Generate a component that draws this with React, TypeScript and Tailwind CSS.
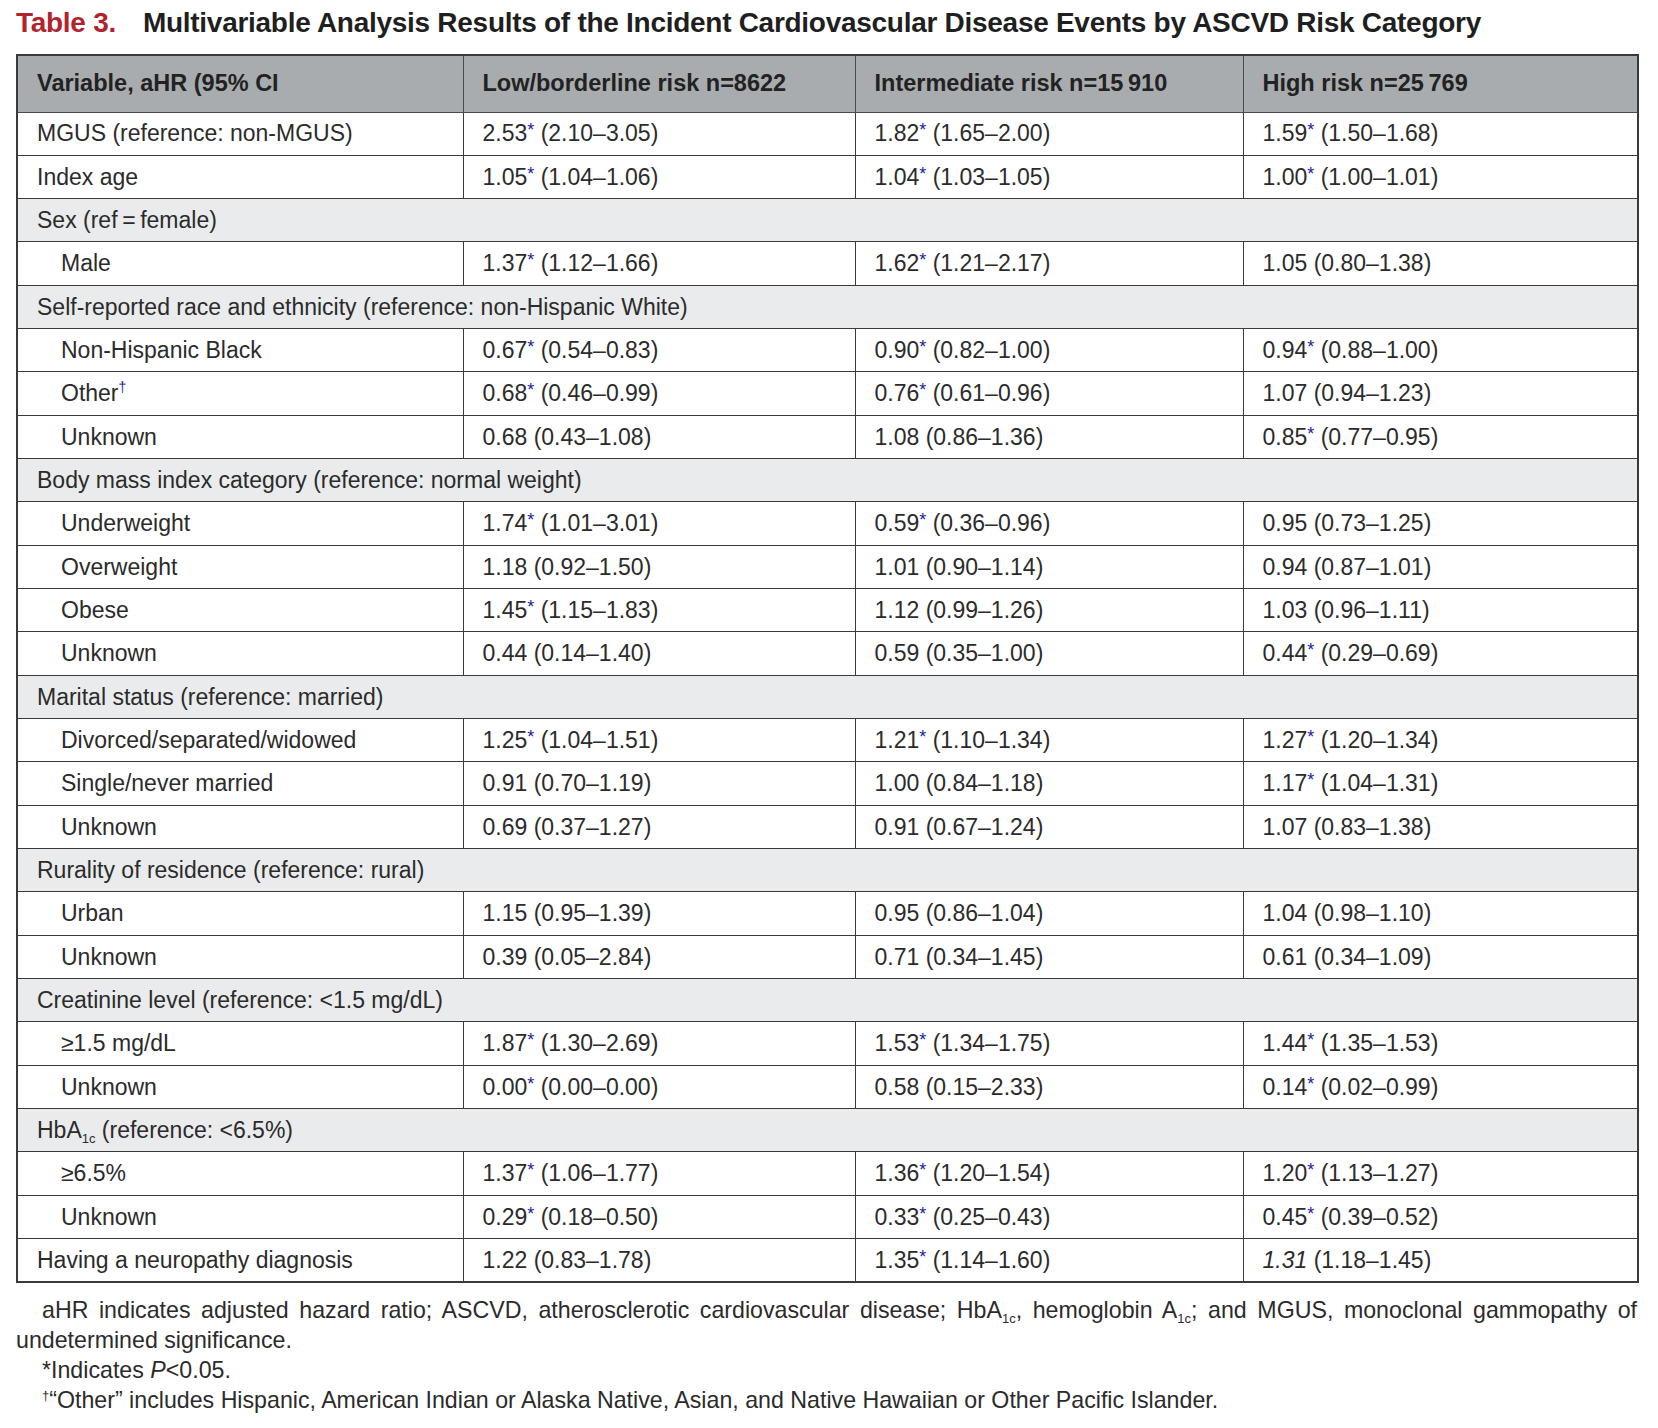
import React from "react";

type Cell = { v: string; star?: boolean; ci: string; italic?: boolean };
type Row =
  | { kind: "section"; label: React.ReactNode }
  | { kind: "data"; label: React.ReactNode; indent?: boolean; cells: Cell[] };

const c = (s: string): Cell => {
  const m = s.match(/^([0-9.]+)(\*?) (.*)$/);
  if (!m) return { v: s, ci: "" };
  return { v: m[1], star: m[2] === "*", ci: m[3] };
};

const Star = () => (
  <span className="relative -top-[5px] text-[18px] leading-none text-[#1c1c9c]">*</span>
);

const Dagger = () => (
  <span className="relative -top-[9px] text-[14px] leading-none text-[#1c1c9c]">†</span>
);

const Sub = ({ children }: { children: React.ReactNode }) => (
  <span className="relative top-[5px] text-[13px] leading-none">{children}</span>
);

const rows: Row[] = [
  { kind: "data", label: "MGUS (reference: non-MGUS)", cells: [c("2.53* (2.10–3.05)"), c("1.82* (1.65–2.00)"), c("1.59* (1.50–1.68)")] },
  { kind: "data", label: "Index age", cells: [c("1.05* (1.04–1.06)"), c("1.04* (1.03–1.05)"), c("1.00* (1.00–1.01)")] },
  { kind: "section", label: "Sex (ref\u2009=\u2009female)" },
  { kind: "data", indent: true, label: "Male", cells: [c("1.37* (1.12–1.66)"), c("1.62* (1.21–2.17)"), c("1.05 (0.80–1.38)")] },
  { kind: "section", label: "Self-reported race and ethnicity (reference: non-Hispanic White)" },
  { kind: "data", indent: true, label: "Non-Hispanic Black", cells: [c("0.67* (0.54–0.83)"), c("0.90* (0.82–1.00)"), c("0.94* (0.88–1.00)")] },
  { kind: "data", indent: true, label: (<>Other<Dagger /></>), cells: [c("0.68* (0.46–0.99)"), c("0.76* (0.61–0.96)"), c("1.07 (0.94–1.23)")] },
  { kind: "data", indent: true, label: "Unknown", cells: [c("0.68 (0.43–1.08)"), c("1.08 (0.86–1.36)"), c("0.85* (0.77–0.95)")] },
  { kind: "section", label: "Body mass index category (reference: normal weight)" },
  { kind: "data", indent: true, label: "Underweight", cells: [c("1.74* (1.01–3.01)"), c("0.59* (0.36–0.96)"), c("0.95 (0.73–1.25)")] },
  { kind: "data", indent: true, label: "Overweight", cells: [c("1.18 (0.92–1.50)"), c("1.01 (0.90–1.14)"), c("0.94 (0.87–1.01)")] },
  { kind: "data", indent: true, label: "Obese", cells: [c("1.45* (1.15–1.83)"), c("1.12 (0.99–1.26)"), c("1.03 (0.96–1.11)")] },
  { kind: "data", indent: true, label: "Unknown", cells: [c("0.44 (0.14–1.40)"), c("0.59 (0.35–1.00)"), c("0.44* (0.29–0.69)")] },
  { kind: "section", label: "Marital status (reference: married)" },
  { kind: "data", indent: true, label: "Divorced/separated/widowed", cells: [c("1.25* (1.04–1.51)"), c("1.21* (1.10–1.34)"), c("1.27* (1.20–1.34)")] },
  { kind: "data", indent: true, label: "Single/never married", cells: [c("0.91 (0.70–1.19)"), c("1.00 (0.84–1.18)"), c("1.17* (1.04–1.31)")] },
  { kind: "data", indent: true, label: "Unknown", cells: [c("0.69 (0.37–1.27)"), c("0.91 (0.67–1.24)"), c("1.07 (0.83–1.38)")] },
  { kind: "section", label: "Rurality of residence (reference: rural)" },
  { kind: "data", indent: true, label: "Urban", cells: [c("1.15 (0.95–1.39)"), c("0.95 (0.86–1.04)"), c("1.04 (0.98–1.10)")] },
  { kind: "data", indent: true, label: "Unknown", cells: [c("0.39 (0.05–2.84)"), c("0.71 (0.34–1.45)"), c("0.61 (0.34–1.09)")] },
  { kind: "section", label: "Creatinine level (reference: <1.5 mg/dL)" },
  { kind: "data", indent: true, label: "≥1.5 mg/dL", cells: [c("1.87* (1.30–2.69)"), c("1.53* (1.34–1.75)"), c("1.44* (1.35–1.53)")] },
  { kind: "data", indent: true, label: "Unknown", cells: [c("0.00* (0.00–0.00)"), c("0.58 (0.15–2.33)"), c("0.14* (0.02–0.99)")] },
  { kind: "section", label: (<>HbA<Sub>1c</Sub> (reference: &lt;6.5%)</>) },
  { kind: "data", indent: true, label: "≥6.5%", cells: [c("1.37* (1.06–1.77)"), c("1.36* (1.20–1.54)"), c("1.20* (1.13–1.27)")] },
  { kind: "data", indent: true, label: "Unknown", cells: [c("0.29* (0.18–0.50)"), c("0.33* (0.25–0.43)"), c("0.45* (0.39–0.52)")] },
  { kind: "data", label: "Having a neuropathy diagnosis", cells: [c("1.22 (0.83–1.78)"), c("1.35* (1.14–1.60)"), { v: "1.31", ci: "(1.18–1.45)", italic: true }] },
];

export default function App() {
  return (
    <div
      className="min-h-screen bg-white text-[#2b2b2b]"
      style={{ fontFamily: '"Liberation Sans", Arial, sans-serif' }}
    >
      <div className="w-[1621px] ml-[16px] pt-[5px]">
        <h1 className="h-[36px] flex items-center text-[28px] font-bold tracking-[-0.28px] text-[#1f1f1f] whitespace-nowrap">
          <span className="text-[#b3232d] mr-[27px]">Table 3.</span>
          <span>Multivariable Analysis Results of the Incident Cardiovascular Disease Events by ASCVD Risk Category</span>
        </h1>
        <table className="mt-[13px] w-[1621px] table-fixed border-collapse border-2 border-[#3a3a3a] text-[23px]">
          <colgroup>
            <col className="w-[446px]" />
            <col className="w-[392px]" />
            <col className="w-[388px]" />
            <col className="w-[395px]" />
          </colgroup>
          <thead>
            <tr className="h-[57px] bg-[#a8acae]">
              {[
                "Variable, aHR (95% CI",
                "Low/borderline risk n=8622",
                "Intermediate risk n=15\u2009910",
                "High risk n=25\u2009769",
              ].map((h, i) => (
                <th
                  key={i}
                  className="border border-[#4a4a4a] px-[19px] text-left text-[23.5px] font-bold text-[#222] whitespace-nowrap"
                >
                  {h}
                </th>
              ))}
            </tr>
          </thead>
          <tbody>
            {rows.map((r, i) =>
              r.kind === "section" ? (
                <tr key={i} className="h-[43.33px] bg-[#e9ebec]">
                  <td colSpan={4} className="border border-[#3a3a3a] px-[19px] whitespace-nowrap">
                    {r.label}
                  </td>
                </tr>
              ) : (
                <tr key={i} className="h-[43.33px]">
                  <td
                    className={
                      r.indent
                        ? "border border-[#3a3a3a] pl-[43px] pr-[10px] whitespace-nowrap"
                        : "border border-[#3a3a3a] px-[19px] whitespace-nowrap"
                    }
                  >
                    {r.label}
                  </td>
                  {r.cells.map((cell, j) => (
                    <td key={j} className="border border-[#3a3a3a] px-[19px] whitespace-nowrap">
                      <span className={cell.italic ? "italic" : ""}>{cell.v}</span>
                      {cell.star ? <Star /> : null} {cell.ci}
                    </td>
                  ))}
                </tr>
              )
            )}
          </tbody>
        </table>
        <div className="mt-[12px] text-[23.2px] leading-[30px] text-[#2b2b2b]">
          <p className="text-justify indent-[26px]">
            aHR indicates adjusted hazard ratio; ASCVD, atherosclerotic cardiovascular disease; HbA
            <Sub>1c</Sub>, hemoglobin A<Sub>1c</Sub>; and MGUS, monoclonal gammopathy of
            undetermined significance.
          </p>
          <p className="indent-[26px]">
            *Indicates <span className="italic">P</span>&lt;0.05.
          </p>
          <p className="indent-[26px]">
            <span className="relative -top-[8px] text-[13px] leading-none">†</span>“Other” includes Hispanic,
            American Indian or Alaska Native, Asian, and Native Hawaiian or Other Pacific Islander.
          </p>
        </div>
      </div>
    </div>
  );
}
